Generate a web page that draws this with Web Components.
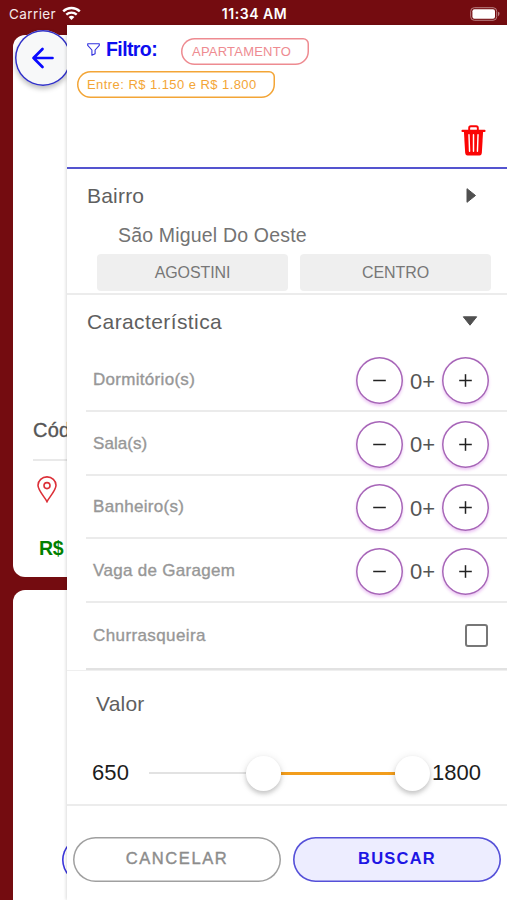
<!DOCTYPE html>
<html lang="pt-BR">
<head>
<meta charset="utf-8">
<title>Filtro</title>
<style>
html,body{margin:0;height:100%;overflow:hidden}
body{font-family:"Liberation Sans",Arial,sans-serif;background:#740c10}
</style>
</head>
<body>
<filter-app></filter-app>
<script>
const define = (name, html) => customElements.define(name, class extends HTMLElement {
  constructor() {
    super();
    const t = document.createElement('template');
    t.innerHTML = html;
    this.attachShadow({mode: 'open'}).append(t.content.cloneNode(true));
  }
});

define('status-bar', `<style>
:host{display:grid;grid-template-columns:1fr auto 1fr;align-items:center;height:25px;padding:2px 7px 0 9px;box-sizing:border-box;color:#f6e9e9;font:400 13.5px/25px Inter,"Liberation Sans",sans-serif}
.l{display:flex;align-items:center;gap:6px;letter-spacing:.4px}
.t{font-weight:600;font-size:14px;letter-spacing:.55px;color:#fff;margin-top:-2px}
.r{display:flex;justify-content:flex-end}
svg{display:block;margin-top:-2px}
</style>
<div class="l"><span>Carrier</span><svg width="19" height="15" viewBox="0 0 19 15" fill="none" stroke="#fff"><path d="M1.2 5.4a12 12 0 0 1 16.6 0" stroke-width="2.4"/><path d="M4.3 8.7a7.5 7.5 0 0 1 10.4 0" stroke-width="2.3"/><path d="M9.5 14L6.6 11.1a4.2 4.2 0 0 1 5.8 0Z" fill="#fff" stroke="none"/></svg></div>
<div class="t">11:34 AM</div>
<div class="r"><svg width="30" height="14" viewBox="0 0 30 14"><rect x=".7" y=".7" width="26" height="12.6" rx="3.6" fill="none" stroke="#b98082" stroke-width="1"/><rect x="2.4" y="2.3" width="22.6" height="9.4" rx="2" fill="#fff"/><path d="M28 4.8q2 .5 1.5 2.2t-1.5 2.2z" fill="#b98082"/></svg></div>`);

define('listing-card', `<style>
:host{display:block;box-sizing:border-box;background:#fff;border-radius:12px;padding:0 20px}
</style><slot></slot>`);

define('back-layer', `<style>
:host{display:block;position:relative;height:875px;padding:10px 0 0 13px;box-sizing:border-box;overflow:hidden}
.one{height:542px;margin-bottom:13px}
.two{height:340px}
.cod{padding-top:383px;height:41px;line-height:24px;font-size:20px;color:#555;-webkit-text-stroke:.35px #555;border-bottom:2px solid #e9e9e9;letter-spacing:.2px}
.pin{display:block;margin:15px 0 0 4px}
.price{margin:31px 0 0 6px;font:700 19.5px/28px "Liberation Sans",sans-serif;color:#008000;letter-spacing:-.3px}
.fab{position:absolute;left:15px;top:5px;width:56px;height:56px;border-radius:50%;background:#f7f8f9;display:grid;place-items:center;box-shadow:inset 0 0 0 1.5px #3030c8,0 3px 5px rgba(0,0,0,.25)}
.pill{position:absolute;left:62px;top:812px;width:120px;height:46px;border-radius:23px;box-shadow:inset 0 0 0 1.6px #3b35dc}
</style>
<listing-card class="one"><div class="cod">Cód</div>
<svg class="pin" width="20" height="27" viewBox="0 0 20 27" fill="none" stroke="#dc3038" stroke-width="1.6"><path d="M10 25.6C8 21.5 1 14.5 1 9.3a9 8.4 0 0 1 18 0c0 5.2-7 12.2-9 16.3Z"/><circle cx="10" cy="9.6" r="3"/></svg>
<div class="price">R$</div></listing-card>
<listing-card class="two"></listing-card>
<div class="fab"><svg width="24" height="22" viewBox="0 0 24 22" fill="none" stroke="#0a0aff" stroke-width="2.7" stroke-linecap="round" stroke-linejoin="round"><path d="M21.5 11H2.5M11.5 2L2.5 11l9 9"/></svg></div>
<div class="pill"></div>`);

define('filter-chip', `<style>
:host{display:inline-block;box-sizing:border-box;height:27px;line-height:27px;font-size:13px;border-radius:14px 6px 14px 14px;white-space:nowrap;box-shadow:inset 0 0 0 1.5px currentColor}
</style><slot></slot>`);

define('panel-header', `<style>
:host{display:block;height:143.5px;box-sizing:border-box;border-bottom:2px solid #5454cf;padding:13px 21px 0 10px}
.row{display:flex;align-items:center;height:27px}
.ic{margin:-5px 6px 0 10px}
.h{font:700 19.5px/24px "Liberation Sans",sans-serif;color:#0d0df0;letter-spacing:-.6px;width:75px;margin-top:-5px}
.a{width:128px;box-sizing:border-box;padding-left:11px;color:#ee8b91;letter-spacing:.22px}
.b{width:198px;padding-left:10px;margin-top:6px;color:#f3a536;letter-spacing:.44px}
.del{display:flex;justify-content:flex-end;margin-top:27px}
</style>
<div class="row"><svg class="ic" width="13" height="13" viewBox="0 0 13 13" fill="none" stroke="#3232df" stroke-width="1.1" stroke-linejoin="round"><path d="M.7.8h11.6v1.5L8.1 7v3.7l-3.2 1.6V7L.7 2.3Z"/></svg><span class="h">Filtro:</span><filter-chip class="a">APARTAMENTO</filter-chip></div>
<filter-chip class="b">Entre: R$ 1.150 e R$ 1.800</filter-chip>
<div class="del"><svg width="25" height="31" viewBox="0 0 26 31" preserveAspectRatio="none"><path d="M8.5 5V3q0-1.7 1.7-1.7h5.6q1.7 0 1.7 1.7v2" fill="none" stroke="#fb0505" stroke-width="2"/><path d="M1.5 5.9h23" stroke="#fb0505" stroke-width="2.1" stroke-linecap="round"/><path d="M3 6h20l-1.3 21.6q-.2 2.9-2.5 2.9H6.8q-2.3 0-2.5-2.9Z" fill="#fb0505"/><path d="M8.3 9.8l.6 16.5M13 9.8v16.500M17.700 9.800l-.6 16.500" stroke="#fff" stroke-width="1.500" stroke-linecap="round"/></svg></div>`);

define('section-title', `<style>
:host{display:flex;justify-content:space-between;align-items:center;height:54px;padding:0 29px 0 20px;color:#5f5f5f;font-size:21px;letter-spacing:var(--ls,.2px)}
svg{display:block;margin-top:-1px}
.down{display:none}
:host([open]) .down{display:block}
:host([open]) .right,:host([plain]) .right{display:none}
</style><span><slot></slot></span>
<svg class="right" width="14" height="15" viewBox="0 0 14 15"><path d="M3 .7l8.500 6.800L3 14.300Z" fill="#505050" stroke="#505050" stroke-linejoin="round"/></svg>
<svg class="down" width="16" height="10" viewBox="0 0 16 10"><path d="M1.300.8h13.400L8 9.200Z" fill="#505050" stroke="#505050" stroke-linejoin="round"/></svg>`);

define('place-button', `<style>
:host{display:block;height:37px;line-height:37px;border-radius:4px;background:#efefef;text-align:center;font-size:16px;letter-spacing:-.1px;color:#777}
</style><slot></slot>`);

define('round-button', `<style>
:host{display:grid;place-items:center;width:47px;height:47px;border-radius:50%;background:#fff;box-shadow:inset 0 0 0 1.5px #a765b8,0 2px 3px rgba(200,80,220,.32)}
.v{display:none}:host([plus]) .v{display:block}
</style><svg width="13" height="13" viewBox="0 0 13 13" stroke="#222" stroke-width="1.500"><path d="M.2 6.500h12.600"/><path class="v" d="M6.500.2v12.600"/></svg>`);

define('count-row', `<style>
:host{display:flex;align-items:center;box-sizing:border-box;height:63.5px;margin-left:19px;padding:3px 18px 0 7px;border-bottom:2px solid #ebebeb}
.lab{flex:1;font-size:17px;line-height:22px;margin-top:-1px;color:#979797;-webkit-text-stroke:.35px #979797;letter-spacing:var(--ls,.3px)}
.n{width:39px;text-align:center;color:#555;font-size:22px;white-space:nowrap;margin-top:2px}
</style><span class="lab"><slot></slot></span><round-button></round-button><span class="n">0+</span><round-button plus></round-button>`);

define('check-row', `<style>
:host{display:flex;align-items:center;justify-content:space-between;box-sizing:border-box;height:67px;margin-left:19px;padding:1px 19px 0 7px;border-bottom:2px solid #e2e2e2;font-size:17px;color:#979797;letter-spacing:.4px;-webkit-text-stroke:.35px #979797}
i{box-sizing:border-box;width:23px;height:23px;border:2px solid #777;border-radius:3px}
</style><slot></slot><i></i>`);

define('range-row', `<style>
:host{display:flex;align-items:center;height:68px;padding:0 26px 0 25px;font-size:22px;color:#1c1c1c}
.lo{width:57px;letter-spacing:.1px}
.track{flex:1;display:flex;align-items:center}
.a{width:97px;height:2px;background:#e2e2e2}
.b{flex:1;height:3px;background:#f29d1c}
.k{width:35px;height:35px;border-radius:50%;background:#fff;box-shadow:0 3px 4px rgba(0,0,0,.17),0 1px 9px rgba(0,0,0,.1);position:relative}
.hi{margin-left:2px}
</style><span class="lo">650</span><div class="track"><div class="a"></div><div class="k"></div><div class="b"></div><div class="k"></div></div><span class="hi">1800</span>`);

define('action-button', `<style>
:host{flex:1;height:45px;text-align:center;line-height:43px;border-radius:23px;color:#8c8c8c;font-size:16.500px;letter-spacing:1.600px;-webkit-text-stroke:.4px currentColor;box-shadow:inset 0 0 0 1.500px #a0a0a0}
:host([primary]){color:#1d16e4;background:#ededff;font-weight:700;-webkit-text-stroke:0;letter-spacing:1.200px;box-shadow:inset 0 0 0 1.600px #5550d8}
</style><slot></slot>`);

define('filter-panel', `<style>
:host{display:block;position:relative;height:875px;background:#fff;box-shadow:-1px 0 3px rgba(0,0,0,.14)}
.bairro{height:126px;box-sizing:border-box;border-bottom:2px solid #ececec}
.city{height:32px;line-height:27px;padding-left:51px;margin-top:-1px;font-size:19.500px;color:#737373;letter-spacing:.18px}
.places{display:grid;grid-template-columns:1fr 1fr;gap:12px;padding:0 16px 0 30px}
.c{height:376.500px;box-sizing:border-box;border-bottom:1px solid #efefef}
.v{height:135px;box-sizing:border-box;border-bottom:2px solid #ececec}
.foot{display:flex;gap:12px;padding:31px 6px 0}
</style>
<panel-header></panel-header>
<div class="bairro"><section-title>Bairro</section-title><div class="city">São Miguel Do Oeste</div>
<div class="places"><place-button>AGOSTINI</place-button><place-button>CENTRO</place-button></div></div>
<div class="c"><section-title open style="--ls:.4px">Característica</section-title>
<count-row>Dormitório(s)</count-row><count-row style="--ls:.05px">Sala(s)</count-row><count-row>Banheiro(s)</count-row><count-row>Vaga de Garagem</count-row><check-row>Churrasqueira</check-row></div>
<div class="v"><section-title plain style="padding:6px 0 0 29px">Valor</section-title><range-row style="margin-top:8px"></range-row></div>
<div class="foot"><action-button>CANCELAR</action-button><action-button primary>BUSCAR</action-button></div>`);

define('filter-app', `<style>
:host{display:grid;grid-template:25px 875px / 67px 440px;width:507px;height:900px;overflow:hidden;background:#740c10}
status-bar{grid-area:1/1/2/3}
back-layer{grid-area:2/1/3/3}
filter-panel{grid-area:2/2/3/3}
</style><status-bar></status-bar><back-layer></back-layer><filter-panel></filter-panel>`);
</script>
</body>
</html>
